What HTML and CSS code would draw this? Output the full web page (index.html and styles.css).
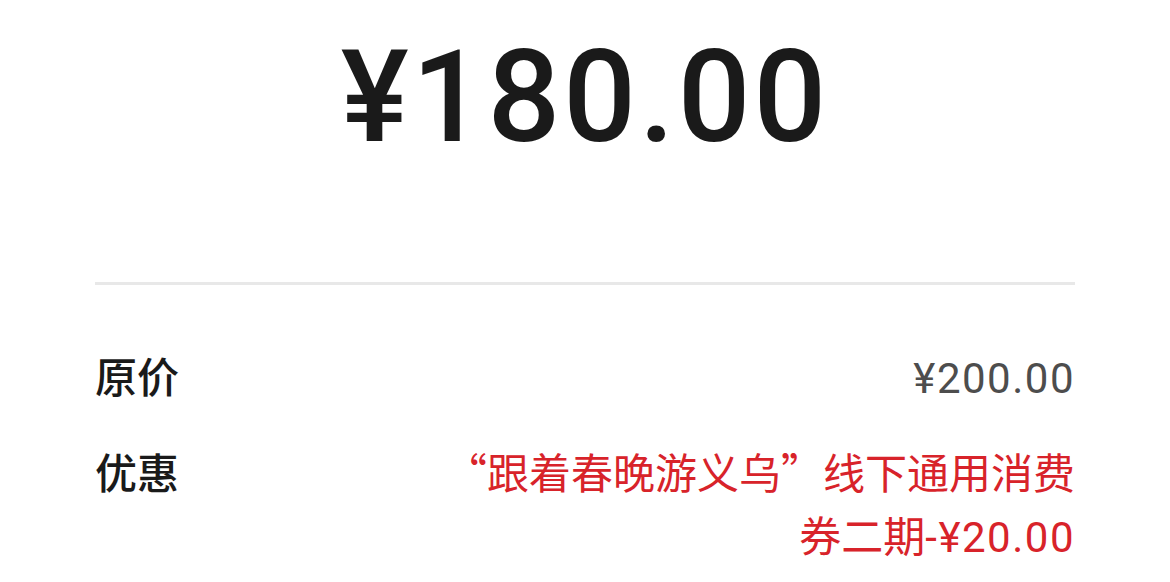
FILE: index.html
```html
<!DOCTYPE html>
<html lang="zh-CN">

<head>
  <meta charset="UTF-8">
  <meta name="viewport" content="width=device-width, initial-scale=1.0">
  <title>支付详情</title>
  <link rel="stylesheet" href="styles.css">
</head>

<body>
  <div class="wrapper">
    <div class="amount">¥180.00</div>
    <hr class="divider">

    <div class="row row-first">
      <div class="label">原价</div>
      <div class="value"><span class="num">¥200.00</span></div>
    </div>

    <div class="row">
      <div class="label">优惠</div>
      <div class="value discount">“跟着春晚游义乌”线下通用消费券二期<span class="num">-¥20.00</span></div>
    </div>
  </div>
</body>

</html>
```

FILE: styles.css
```css
body {
  margin: 0;
  background: #ffffff;
  font-family: "Noto Sans CJK SC", "Noto Sans", sans-serif;
  color: #1a1a1a;
}

.wrapper {
  padding: 0 95px;
}

.amount {
  font-family: Roboto, "Noto Sans", sans-serif;
  font-weight: 500;
  font-size: 128px;
  line-height: 1;
  letter-spacing: 3px;
  text-align: center;
  padding-top: 33px;
  height: 282px;
  box-sizing: border-box;
}

.divider {
  border: 0;
  height: 3px;
  background: #e8e8e8;
  margin: 0;
}

.row {
  display: flex;
  justify-content: space-between;
  align-items: flex-start;
  font-size: 42px;
  line-height: 63px;
  margin-top: 29px;
}

.row-first {
  margin-top: 58px;
}

.label {
  font-weight: 500;
  color: #1a1a1a;
}

.value {
  color: #4d4d4d;
  text-align: right;
}

.num {
  font-family: Roboto, "Noto Sans", sans-serif;
  letter-spacing: 1.5px;
}

.discount {
  color: #d8232a;
  max-width: 640px;
}
```
